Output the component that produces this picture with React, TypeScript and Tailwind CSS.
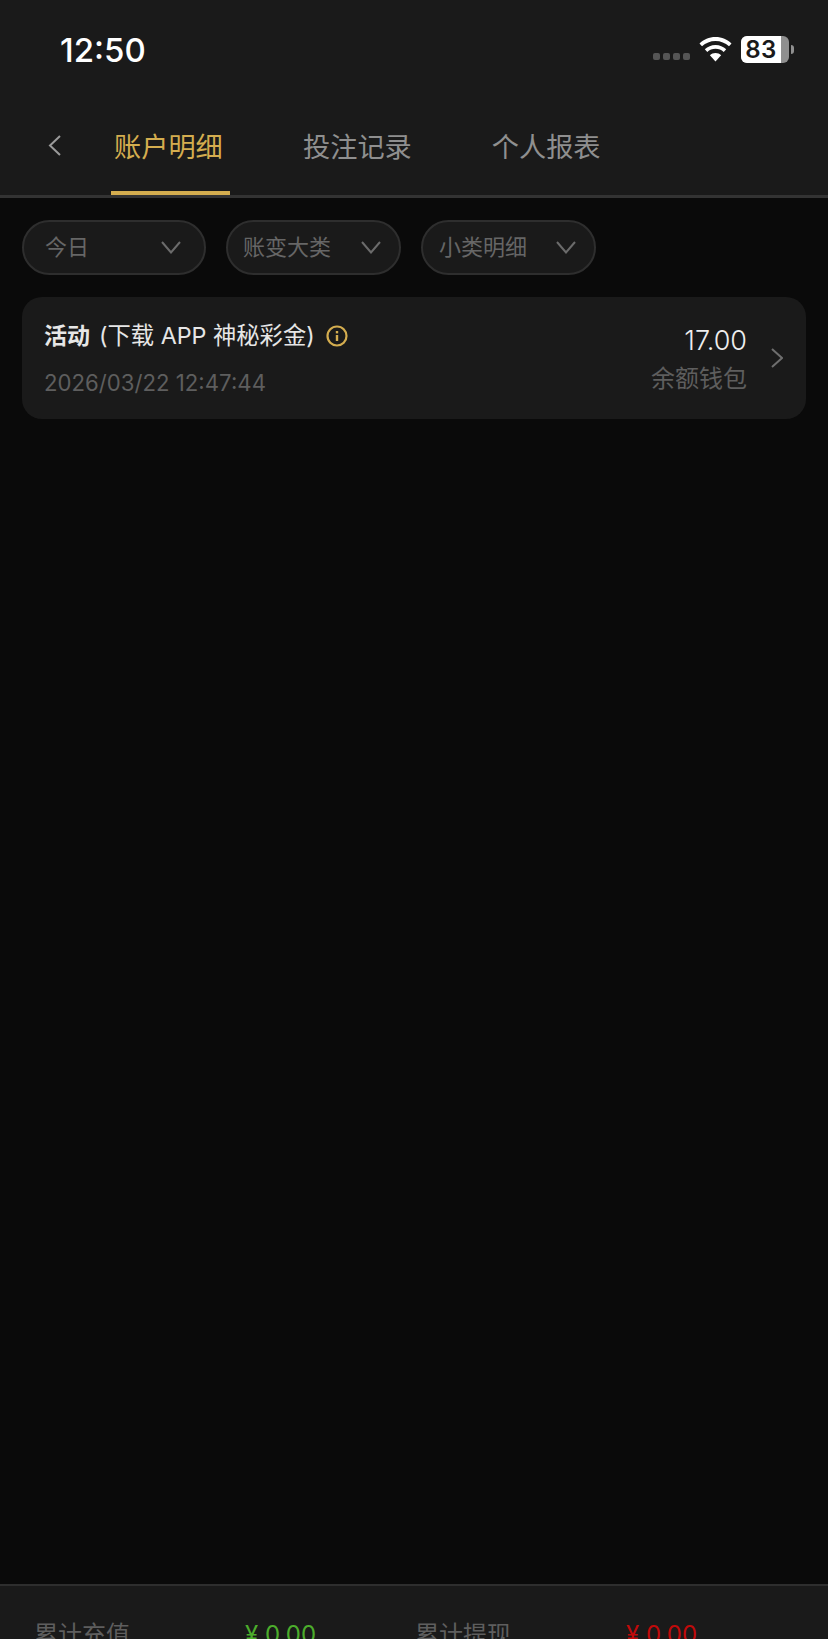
const cjk = "font-['Inter','Noto_Sans_CJK_SC',sans-serif]";

function Chevron({ points, className, width, height }: { points: string; className: string; width: number; height: number }) {
  return (
    <svg className={className} width={width} height={height} viewBox={`0 0 ${width} ${height}`} fill="none" stroke="currentColor" strokeWidth="2">
      <polyline points={points} />
    </svg>
  );
}

function Pill({ label, width, gap }: { label: string; width: string; gap: string }) {
  return (
    <div className={`flex h-[55px] items-center rounded-full border-2 border-[#2e2e2e] bg-[#1a1a1a] ${width} ${gap}`}>
      <span className="-mt-[2px] text-[22px] leading-none text-[#666666]">{label}</span>
      <Chevron points="1,1 10,11.500 19,1" width={20} height={13} className="ml-auto text-[#6b6b6b]" />
    </div>
  );
}

function StatusBar() {
  return (
    <div className="flex h-[100px] items-start justify-between pl-[60px] pr-[34px] pt-[30px]">
      <span className="text-[33px] font-medium leading-[40px] text-white">12:50</span>
      <div className="flex items-center pt-[6px]">
        <div className="mt-[14px] flex gap-[3px]">
          <span className="h-[7px] w-[7px] rounded-[2px] bg-[#555555]" />
          <span className="h-[7px] w-[7px] rounded-[2px] bg-[#555555]" />
          <span className="h-[7px] w-[7px] rounded-[2px] bg-[#555555]" />
          <span className="h-[7px] w-[7px] rounded-[2px] bg-[#555555]" />
        </div>
        <svg className="ml-[9px]" width="33" height="25" viewBox="0 0 33 25" fill="white">
          <path d="M16.5 0C10 0 4.700 2.600 0.500 6.500L3 9.300C6.700 5.900 11.300 3.900 16.500 3.900C21.700 3.900 26.300 5.900 30 9.300L32.500 6.500C28.300 2.600 23 0 16.500 0Z" />
          <path d="M16.500 8C12.300 8 8.700 9.600 5.800 12.300L8.300 15C10.500 13 13.300 11.800 16.500 11.800C19.700 11.800 22.500 13 24.700 15L27.200 12.300C24.300 9.600 20.700 8 16.500 8Z" />
          <path d="M16.500 16C14.300 16 12.400 16.800 10.900 18.200L16.500 24.500L22.100 18.200C20.600 16.800 18.700 16 16.500 16Z" />
        </svg>
        <div className="relative ml-[9px] flex h-[27px] w-[48px] items-center overflow-hidden rounded-[6px] bg-[#8f8f8f]">
          <div className="flex h-full w-[40px] items-center justify-center bg-white">
            <span className="text-[24px] font-semibold leading-none tracking-[0.5px] text-[#1a1a1a]">83</span>
          </div>
        </div>
        <div className="ml-[2px] h-[9px] w-[3px] rounded-r-[3px] bg-[#8f8f8f]" />
      </div>
    </div>
  );
}

function Tabs() {
  return (
    <div className="flex h-[98px] items-start border-b-[3px] border-[#333333]">
      <div className="flex h-[95px] w-[111px] items-start pl-[48px] pt-[35px]">
        <Chevron points="12,1 2,10.500 12,20" width={14} height={21} className="text-[#9a9a9a]" />
      </div>
      <div className="flex h-[95px] w-[119px] flex-col border-b-4 border-[#d4ad4f] pl-[3px]">
        <span className="mt-[31px] text-[27.200px] leading-[34px] text-[#d4ad4f]">账户明细</span>
      </div>
      <span className="ml-[73px] mt-[31px] text-[27.200px] leading-[34px] text-[#8f8f8f]">投注记录</span>
      <span className="ml-[80px] mt-[31px] text-[27.200px] leading-[34px] text-[#8f8f8f]">个人报表</span>
    </div>
  );
}

function RecordCard() {
  return (
    <div className="mx-[22px] mt-[22px] flex h-[122px] items-center rounded-[20px] bg-[#1a1a1a] pl-[23px] pr-[23px]">
      <div className="flex flex-col">
        <div className="-ml-[1px] flex items-center">
          <span className="text-[23px] font-semibold leading-[34px] text-[#e6e6e6]">活动</span>
          <span className="ml-[9px] text-[23.300px] leading-[34px] text-[#e6e6e6]">(下载 APP 神秘彩金)</span>
          <svg className="ml-[11px]" width="22" height="22" viewBox="0 0 22 22" fill="none" stroke="#d4ad4f" strokeWidth="2.200">
            <circle cx="11" cy="11" r="9.500" />
            <path d="M11 10v6" strokeWidth="2.400" />
            <path d="M11 6v2.400" strokeWidth="2.400" />
          </svg>
        </div>
        <span className="-ml-[1px] mt-[15px] text-[22.200px] leading-[30px] text-[#5e5e5e]">2026/03/22 12:47:44</span>
      </div>
      <div className="ml-auto flex flex-col items-end">
        <span className="mt-[1px] text-[27px] font-light leading-[34px] text-[#eeeeee]">17.00</span>
        <span className="mt-[6px] text-[24px] leading-[30px] text-[#5e5e5e]">余额钱包</span>
      </div>
      <Chevron points="1,1 11,10 1,19" width={12} height={20} className="ml-[24px] text-[#6e6e6e]" />
    </div>
  );
}

function Totals() {
  return (
    <div className="h-[55px] overflow-hidden border-t-2 border-[#2e2e2e] bg-[#1a1a1a]">
      <div className="mt-[32px] flex pl-[34px] text-[24px] leading-[34px]">
        <span className="w-[211px] text-[#5e5e5e]">累计充值</span>
        <span className="w-[170px] text-[#4cad2c]">¥ 0.00</span>
        <span className="w-[211px] text-[#5e5e5e]">累计提现</span>
        <span className="text-[#c00a0a]">¥ 0.00</span>
      </div>
    </div>
  );
}

export default function App() {
  return (
    <div className={`flex h-[1639px] w-[828px] flex-col overflow-hidden bg-[#0a0a0a] ${cjk}`}>
      <div className="bg-[#1a1a1a]">
        <StatusBar />
        <Tabs />
      </div>
      <div className="flex-1">
        <div className="mt-[22px] flex gap-[20px] pl-[22px]">
          <Pill label="今日" width="w-[184px]" gap="pl-[21px] pr-[23px]" />
          <Pill label="账变大类" width="w-[175px]" gap="pl-[15px] pr-[18px]" />
          <Pill label="小类明细" width="w-[175px]" gap="pl-[16px] pr-[18px]" />
        </div>
        <RecordCard />
      </div>
      <Totals />
    </div>
  );
}
